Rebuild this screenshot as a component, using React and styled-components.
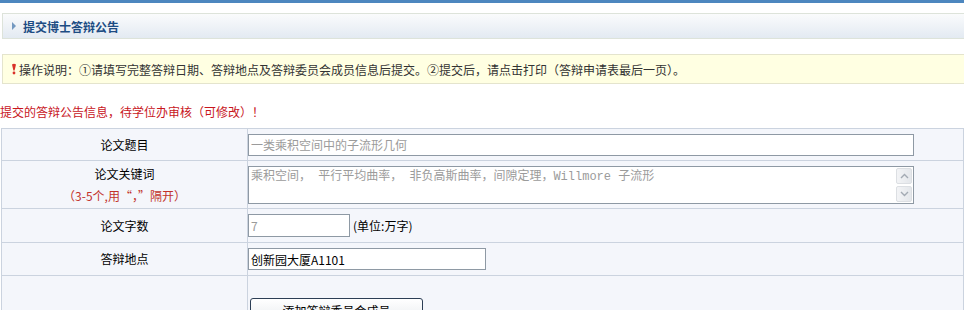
import React from "react";
import styled, { createGlobalStyle } from "styled-components";

const Global = createGlobalStyle`
  html, body { margin: 0; padding: 0; background: #fff; }
  body { font-family: "SimSun", "Noto Sans CJK SC", "Liberation Sans", sans-serif; font-size: 12px; color: #000; }
  * { box-sizing: border-box; }
`;

const Page = styled.div`
  width: 964px;
  overflow: hidden;
`;

const TopBar = styled.div`
  height: 3px;
  background: #4d87bf;
`;

const TitleBox = styled.div`
  margin: 10px 0 0 2px;
  height: 26px;
  border: 1px solid #dde3da;
  border-right: none;
  background: linear-gradient(#fafbfc, #e3eaf2);
  display: flex;
  align-items: center;
  padding-left: 9px;
  gap: 7px;
`;

const Arrow = styled.span`
  width: 0;
  height: 0;
  border-top: 4px solid transparent;
  border-bottom: 4px solid transparent;
  border-left: 4px solid #7398c0;
`;

const TitleText = styled.span`
  font-weight: bold;
  font-size: 12px;
  color: #1d4c83;
`;

const Notice = styled.div`
  margin: 15px 0 0 2px;
  height: 30px;
  border: 1px solid #e4e4cd;
  border-right: none;
  background: #ffffe2;
  display: flex;
  align-items: center;
  padding-left: 8px;
  gap: 2px;
  color: #333;
`;

const Alert = styled.span`
  font-size: 12px;
  line-height: 1;
`;

const RedMsg = styled.div`
  margin-top: 20px;
  color: #c8161d;
  line-height: 16px;
  height: 16px;
`;

const Table = styled.table`
  margin: 8px 0 0 1px;
  width: 963px;
  border-collapse: collapse;
  background: #f4f6fb;
  td {
    border: 1px solid #cbd3df;
    padding: 0;
    vertical-align: middle;
  }
`;

const Row = styled.tr`
  height: ${(p) => p.$h}px;
`;

const Label = styled.td`
  width: 246px;
  text-align: center;
  line-height: 22px;
`;

const Hint = styled.div`
  color: #c2322a;
`;

const Value = styled.td`
  padding-left: 0;
`;

const Input = styled.input`
  display: block;
  width: ${(p) => p.$w}px;
  height: ${(p) => p.$hgt || 23}px;
  margin: 0;
  border: 1px solid #8e99a4;
  background: #fff;
  padding: 0 2px;
  font: 12px "SimSun", "Noto Sans CJK SC", "Liberation Sans", sans-serif;
  color: ${(p) => (p.$dim ? "#9b9b9b" : "#000")};
  outline: none;
`;

const Inline = styled.div`
  display: flex;
  align-items: center;
  gap: 3px;
`;

const AreaBox = styled.div`
  width: 666px;
  height: 38px;
  border: 1px solid #8e99a4;
  background: #fff;
  display: flex;
`;

const Area = styled.textarea`
  flex: 1;
  border: none;
  resize: none;
  overflow: hidden;
  padding: 2px 2px;
  margin: 0;
  font: 12px "Liberation Mono", "Noto Sans CJK SC", monospace;
  line-height: 16px;
  color: #9b9b9b;
  outline: none;
`;

const Scroll = styled.div`
  width: 17px;
  display: flex;
  flex-direction: column;
  justify-content: space-between;
  padding: 1px 1px 1px 0;
`;

const ScrollBtn = styled.div`
  height: 16px;
  border: 1px solid #dcdfe3;
  border-radius: 2px;
  background: linear-gradient(90deg, #f3f4f6, #e4e7eb);
  display: flex;
  align-items: center;
  justify-content: center;
`;

const Button = styled.button`
  margin: 22px 0 0 2px;
  width: 173px;
  height: 24px;
  border: 1px solid #2c3e55;
  border-radius: 3px;
  background: linear-gradient(#ffffff, #e9ecef);
  font: 12px "SimSun", "Noto Sans CJK SC", "Liberation Sans", sans-serif;
  color: #000;
  padding: 0;
  display: block;
`;

const Chevron = ({ up }) => (
  <svg width="9" height="6" viewBox="0 0 9 6">
    <path
      d={up ? "M1 5 L4.5 1.5 L8 5" : "M1 1 L4.5 4.5 L8 1"}
      fill="none"
      stroke="#a3aab3"
      strokeWidth="1.4"
    />
  </svg>
);

const AlertIcon = () => (
  <svg width="6" height="12" viewBox="0 0 6 12">
    <path d="M1 1.5 Q3 0 5 1.5 L3.6 7.5 L2.4 7.5 Z" fill="#d9312a" />
    <circle cx="3" cy="10" r="1.4" fill="#d9312a" />
  </svg>
);

export default function App() {
  return (
    <Page>
      <Global />
      <TopBar />
      <TitleBox>
        <Arrow />
        <TitleText>提交博士答辩公告</TitleText>
      </TitleBox>
      <Notice>
        <Alert>
          <AlertIcon />
        </Alert>
        <span>
          操作说明：①请填写完整答辩日期、答辩地点及答辩委员会成员信息后提交。②提交后，请点击打印（答辩申请表最后一页）。
        </span>
      </Notice>
      <RedMsg>提交的答辩公告信息，待学位办审核（可修改）！</RedMsg>
      <Table>
        <tbody>
          <Row $h={32}>
            <Label>论文题目</Label>
            <Value>
              <Input $w={666} $hgt={22} $dim readOnly value="一类乘积空间中的子流形几何" />
            </Value>
          </Row>
          <Row $h={48}>
            <Label>
              <div>论文关键词</div>
              <Hint>（3-5个,用“，”隔开）</Hint>
            </Label>
            <Value>
              <AreaBox>
                <Area
                  readOnly
                  value="乘积空间， 平行平均曲率， 非负高斯曲率，间隙定理，Willmore 子流形"
                />
                <Scroll>
                  <ScrollBtn>
                    <Chevron up />
                  </ScrollBtn>
                  <ScrollBtn>
                    <Chevron />
                  </ScrollBtn>
                </Scroll>
              </AreaBox>
            </Value>
          </Row>
          <Row $h={34}>
            <Label>论文字数</Label>
            <Value>
              <Inline>
                <Input $w={102} $hgt={23} $dim readOnly value="7" />
                <span>(单位:万字)</span>
              </Inline>
            </Value>
          </Row>
          <Row $h={33}>
            <Label>答辩地点</Label>
            <Value>
              <Input $w={238} $hgt={22} readOnly value="创新园大厦A1101" />
            </Value>
          </Row>
          <Row $h={60}>
            <Label />
            <Value style={{ verticalAlign: "top" }}>
              <Button>添加答辩委员会成员</Button>
            </Value>
          </Row>
        </tbody>
      </Table>
    </Page>
  );
}
